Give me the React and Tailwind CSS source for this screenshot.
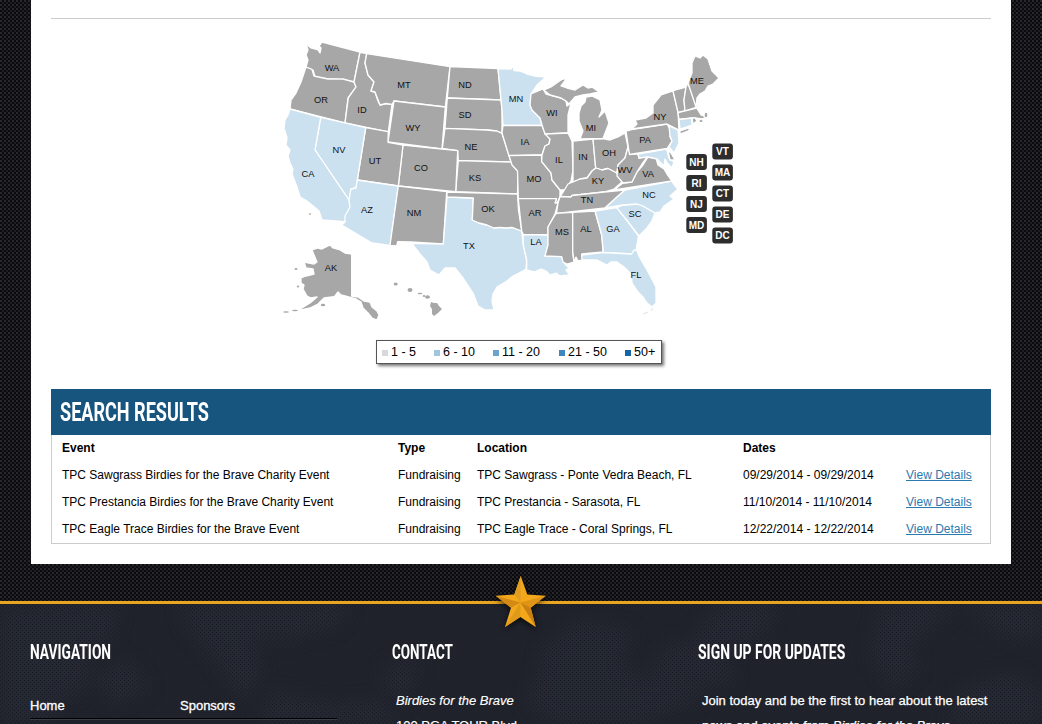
import React from "react";

const GRAY = "#a7a7a7";
const BLUE = "#cce1f0";

const states = [
  ["WA", GRAY, 332, 67, "306,44 311,48 318,50 320,53 321,48 319,46 322,42 360,52 354,82 343,80 328,79 315,77 313,70 306,67 308,60 306,55 308,50"],
  ["OR", GRAY, 321, 99, "306,67 312,69.5 314,76 328,79 343,79 354,82 356,87 348,98 345,123 290,109 291,100 296,93 301,82"],
  ["ID", GRAY, 362, 109, "360,52.3 366.7,53.7 365,63 368,75 374,82 371,91 375,92 378,101 380,105 386,103.5 392,104 388.3,132 345,123 348.3,98 356,87 354,82"],
  ["MT", GRAY, 404, 84, "366.7,53.7 450,66.7 445.3,107 394,101 392,104.5 386,103.5 380,105 375,92 371,91 374,82 368,75 365,63"],
  ["WY", GRAY, 413, 127, "394,101 445.3,107 442,149 388,142"],
  ["ND", GRAY, 465, 84, "450,66.7 498,68.5 501,100 447.3,98"],
  ["SD", GRAY, 465, 114, "447.3,98 501,100 502,110 502,133 496.7,131 486.7,130 445,128.3"],
  ["NE", GRAY, 471, 146, "445,128.3 486.7,130 496.7,131 502,133.5 509,155 511,162 458.3,160.7 457.7,150.7 442.3,148.5"],
  ["KS", GRAY, 475, 177, "458.3,160.7 511,162 514,167 518,171 517.5,194 455.7,191.7"],
  ["CO", GRAY, 421, 167, "403,145 442,149 457.7,150.7 455.7,191.7 398.3,186"],
  ["UT", GRAY, 375, 160, "365.7,127.7 388.3,131.7 388,142.3 403,145 398.3,186 357.3,180"],
  ["NV", BLUE, 339, 149, "320.7,117.3 365.7,127.7 357.3,180 356,188 351,189 349,200 315,150"],
  ["CA", BLUE, 308, 173, "290,109 320.7,117.3 315,150 349,200 350,207 345,221.7 322,220 319,211 307,201 300,197 297,187 292,174 293,169 290,163 288,156 290,150 286,145 287,138 284,128 285,120 288,115"],
  ["AZ", BLUE, 367, 209, "357.3,180 398.3,186 390,245.5 372,243 341.7,225 345,222 345,216 350,207 349,200 351,189 356,188"],
  ["NM", GRAY, 414, 212, "398.3,186 446.7,191.7 443.3,244 411,242 397.7,241.7 396.7,246 390,245.5"],
  ["TX", BLUE, 469, 245, "447,197 473.3,198 472.3,220 479,223 487,225 494,228 500,227.3 506,228 512,227.3 521.7,231 523.3,245 526.7,260 526,269.3 519,273 513,276 507,281 497,287 493,294 492,301 494,310 485,310 478,306 473,293 463,278 455,268 445,268 439,275 430,270 427,262 420,254 411.7,243.3 443.3,244"],
  ["OK", GRAY, 488, 208, "447,192 517.5,194 518.5,210 521.7,231 512,227.3 506,228 500,227.3 494,228 487,225 479,223 472.3,220 473.3,198 447,197"],
  ["MN", BLUE, 516, 98, "498,68.7 511,69 512.5,65 514,70.5 520,71 527,74 535,76 546,77 537,85 533,91 531,94 530,105 532,110 540,118 542,125.5 503,125.5 502,110"],
  ["IA", GRAY, 525, 141, "503,125.5 542,125.5 545,133 550,139 549,144 545,146 542,155 509,156 502,133"],
  ["MO", GRAY, 534, 178, "509,155.5 541.5,155 541.7,161.7 551,173 552,180 560,190 560,197 557,203 555,203 556.5,198.7 518.3,198.7 517.5,171 512,165"],
  ["AR", GRAY, 535, 212, "518.3,198.7 556.5,198.7 555,203 558,203 555,214 548,227 548,235 523.3,234.5 521.7,231"],
  ["LA", BLUE, 536, 241, "523,234.7 548,235 548,245 545,256 561.7,256.7 564,263 569,268 566,270 570,275 560,276 556,273 550,275 546,271 541,269 534,272 526.7,270 526.7,260 523.3,245"],
  ["WI", GRAY, 552, 112, "531,94 538,91 543,89 546,94 550,95 561,98 566,101 567,106 571,103 568,115 568,133 545,134 542,125 540,118 532,110 530,105"],
  ["IL", GRAY, 559, 159, "545,134 568,133 572,141 573,170 571,181 565,190 560,190 552,180 551,173 541.7,161.7 542,155 545,146 549,144 550,139"],
  ["IN", GRAY, 583, 156, "573,141 593,139 595.7,168 592,171 587,178 580,179 573,182 573,170"],
  ["OH", GRAY, 609, 152, "593,139 603,138.5 610,140 618,137 625,133 628,147 625,158 618,165 616.7,173 608,168.5 602,170 595.7,168"],
  ["MI", GRAY, 591, 127, "580,139 583,131 579,121 579,113 581,106 585,102 586,97 592,96 600,100 602,110 599,117 605,111 609,123 603,138.5"],
  ["", GRAY, 0, 0, "544,90 551,87 561,80 567,78 561,86 567,88 575,90 583,85 588,88 592,87 599,92 590,94 583,95 575,97 569,104 566,101 561,98 550,95"],
  ["KY", GRAY, 598, 180, "560,197 565,189 568,184 573,182 580,179 587,178 592,171 596,168 602,170 608,168.5 616.7,173 622,182 614,189 604,192 572,195.5 571,197"],
  ["TN", GRAY, 587, 199, "560,196.5 571,197 572,195.5 604,192 625,190 617,197 605,208 556.5,213.5 558,203"],
  ["MS", GRAY, 562, 231, "556.5,213.3 572.7,212.3 572.7,251.7 574,262 567,264 563,262 561.7,256.7 545,256 548,245 548,227 555,215"],
  ["AL", GRAY, 586, 228, "572.7,212.3 595,211 601.7,235 603,252 581.7,254 583,260 578,261 576,257 574,262 572.7,251"],
  ["GA", BLUE, 613, 228, "595,211 616.7,207.7 626.7,220 638.5,236 636,250 634,251 631.7,254 603.5,252.5 601.7,235"],
  ["SC", BLUE, 635, 213, "616.7,207.7 623,205 637,204 643,206 655,213 652,221 647,228 639,236 626.7,220"],
  ["NC", BLUE, 649, 194, "605,208 617,197 625,190 671.7,181 675,186 678,189 670,196 674,199 664,206 660,212 655,213 643,206 637,204 623,205"],
  ["FL", BLUE, 636, 274, "581.7,255 603,252.7 631.7,254 634,250 637,251 640,258 648,271.7 656,287 656,303 652,307 647,303 643,297 638,292 632,283 631,274 624,267 617,262 611,262 607,265 597,260 582,260"],
  ["VA", GRAY, 648, 173, "614,190 623,183 632,182 637,172 643,165 648,157 656,158 658,165 664,169 667,174 672,181"],
  ["WV", GRAY, 625, 169, "628,147 630,154 638,154 639,158 648,156 642,164 637,172 632,182 623,183 617,176 618,165 625,158"],
  ["", BLUE, 0, 0, "638,154 666.7,149 669,158 674,162 672,168 668,164 665,159 664,166 657,159 648,157 639,158"],
  ["", GRAY, 0, 0, "668,150 671,153 675,160 670,160"],
  ["PA", GRAY, 645, 139, "626,131 631.7,129.5 667,124 671,131 670,137 672,141 667,148.5 629.5,154.5"],
  ["NY", GRAY, 660, 116, "631.7,129 637,124 635,120 646,118 653,113 653,105 661,95 673,91 678,112 679,130 667,124"],
  ["", BLUE, 0, 0, "669,126 678,130 679,143 674,153 669,147 672,141 670,136"],
  ["", GRAY, 0, 0, "680,131 692,127 688,131 680,134"],
  ["", GRAY, 0, 0, "673,90.7 686,87 684,100 685,111 678,112.5"],
  ["", GRAY, 0, 0, "686,87 688,83 696.7,107 685,111 684,100"],
  ["", GRAY, 0, 0, "678,112.7 696.7,108 701,115 706,117 702,119 695,118 679,119.5"],
  ["", BLUE, 0, 0, "679,119.5 691.5,118 692,125 680,129"],
  ["", GRAY, 0, 0, "692,118 695,118 697,121 693,124"],
  ["ME", GRAY, 697, 80, "688,83 692,73 692,63 695,56 700,58 703,55 708,59 712,71 719,78 713,84 708,86 705,91 700,94 697,98 696,107"],
  ["AK", GRAY, 331, 267, "312,250 318,248 322,249 330,245 333,248 340,250 345,253 351.7,254 351.7,296 358,297 364,301 370,302 372,307 377,311 379,315 377,320 372,318 368,313 363,308 361,302 356,299 345,296 341,295 338,292 335,296 332,297 324,298 318,304 310,308 297,311 310,303 317,297 311,298 307,296 303,289 304,285 301,283 301,278 306,276 314,274 313,269 306,268 304,262 314,264 317,262"],
];

const badges = [
  ["VT", 712, 143.5], ["NH", 686, 154], ["MA", 712, 164.5], ["RI", 686, 175], ["CT", 712, 185.5],
  ["NJ", 686, 196], ["DE", 712, 206.5], ["MD", 686, 217], ["DC", 712, 227.5],
];

const islets = [
  [395.7, 284, 2, 1.5], [410, 290, 2.5, 2], [420, 293.5, 2.5, 0.8], [424, 296, 1.2, 1], [427.5, 297, 2.5, 1.8],
  [310, 214, 1.2, 0.8], [296, 269, 1.5, 1], [298, 286.5, 1.2, 1], [323, 305, 2.2, 1.3], [295, 310.5, 3, 0.8], [286, 312, 3, 0.8],
  [701, 121, 1.5, 1], [706, 115, 1.3, 2.2],
];

function UsMap() {
  return (
    <svg className="ml-[224px] block h-[290px] w-[470px]" viewBox="275 35 470 290" fontFamily="Liberation Sans, Arial, sans-serif">
      <g stroke="#fff" strokeWidth="1.3" strokeLinejoin="round">
        {states.map(([, fill, , , pts], i) => (
          <polygon key={i} points={pts} fill={fill} />
        ))}
      </g>
      {islets.map(([cx, cy, rx, ry], i) => (
        <ellipse key={i} cx={cx} cy={cy} rx={rx} ry={ry} fill={GRAY} />
      ))}
      <polygon points="431,302 434,303 437,303 439,306 442,309 438,313 434,316 432,314 432,309 430,306" fill={GRAY} />
      <path d="M643 314l5-2M653 308l-2 3" stroke="#dde3e6" strokeWidth="1" />
      <g fontSize="9.3" fill="#111" textAnchor="middle">
        {states.filter((s) => s[0]).map(([name, , x, y]) => (
          <text key={name} x={x} y={y + 3.7}>{name}</text>
        ))}
      </g>
      {badges.map(([name, x, y]) => (
        <g key={name}>
          <rect x={x + 0.3} y={y} width="20.6" height="16" rx="3" fill="#2d2d2d" />
          <text x={x + 10.5} y={y + 11.6} fontSize="10" fontWeight="bold" fill="#fff" textAnchor="middle">{name}</text>
        </g>
      ))}
    </svg>
  );
}

const legend = [
  ["1 - 5", "bg-[#d9d9d9]", "w-[52px]"],
  ["6 - 10", "bg-[#9fc5df]", "w-[59px]"],
  ["11 - 20", "bg-[#6ba3cc]", "w-[66px]"],
  ["21 - 50", "bg-[#3f86bd]", "w-[66px]"],
  ["50+", "bg-[#1566a6]", "w-[32px]"],
];

const rows = [
  ["TPC Sawgrass Birdies for the Brave Charity Event", "TPC Sawgrass - Ponte Vedra Beach, FL", "09/29/2014 - 09/29/2014"],
  ["TPC Prestancia Birdies for the Brave Charity Event", "TPC Prestancia - Sarasota, FL", "11/10/2014 - 11/10/2014"],
  ["TPC Eagle Trace Birdies for the Brave Event", "TPC Eagle Trace - Coral Springs, FL", "12/22/2014 - 12/22/2014"],
];

const rowGrid = "grid h-[27px] grid-cols-[336px_79px_266px_163px_80px] items-center pb-[2px] pl-[10px]";

const patches = [
  "0,610 50,604 120,606 112,640 90,650 88,690 60,700 50,724 0,724",
  "178,604 260,604 350,604 340,625 290,640 255,638 262,680 240,700 215,660 190,632",
  "95,672 130,660 150,690 110,705",
  "545,645 580,620 632,630 622,665 650,680 690,665 700,700 640,724 560,724 525,705 535,680",
  "650,670 672,640 700,655 690,690 655,694",
  "880,605 960,604 910,645 918,670 892,690 870,655",
  "965,604 1042,604 1042,640 1000,634",
  "960,690 1010,672 1042,690 1042,724 950,724",
  "385,665 420,660 408,700 385,695",
  "270,690 330,704 380,700 400,724 260,724",
  "720,604 780,604 760,640 725,650 735,680 700,690 690,640",
];

function FooterTexture() {
  return (
    <svg className="absolute inset-0 h-full w-full" viewBox="0 604 1042 120" preserveAspectRatio="none">
      <defs>
        <pattern id="mesh" width="4" height="4" patternUnits="userSpaceOnUse">
          <rect width="4" height="4" fill="#272a36" />
          <path d="M0 0h1v1h-1zM2 2h1v1h-1z" fill="#171b21" />
        </pattern>
        <pattern id="fine" width="4" height="4" patternUnits="userSpaceOnUse">
          <rect width="4" height="4" fill="#20232c" />
          <path d="M0 0h1v1h-1zM2 2h1v1h-1z" fill="#1b1e25" />
        </pattern>
        <filter id="soft"><feGaussianBlur stdDeviation="8" /></filter>
        <mask id="camo">
          <g fill="#ccc" filter="url(#soft)">
            {patches.map((p, i) => <polygon key={i} points={p} />)}
          </g>
        </mask>
      </defs>
      <rect x="0" y="604" width="1042" height="120" fill="url(#fine)" />
      <rect x="0" y="604" width="1042" height="120" fill="url(#mesh)" mask="url(#camo)" />
    </svg>
  );
}

function Star() {
  return (
    <svg className="absolute left-[490px] top-[-33px] h-[60px] w-[62px] drop-shadow-[0_2px_3px_rgba(0,0,0,0.7)]" viewBox="490 571 62 60">
      <polygon points="520.7,576 527.3,594.5 545.7,595.7 530.7,607.7 535.7,627 520.3,617 505,627 511,607.7 495.7,595.7 514.3,594.5" fill="#f3a81c" />
      <g fill="#c97e12">
        <polygon points="520.7,576 520.5,602.5 514.3,594.5" fill="#e09c20" />
        <polygon points="495.7,595.7 520.5,602.5 511,607.7" fill="#d58a16" />
        <polygon points="545.7,595.7 520.5,602.5 530.7,607.7" fill="#df9418" />
        <polygon points="505,627 520.5,602.5 520.3,617" fill="#e09a1a" />
        <polygon points="535.7,627 520.5,602.5 530.7,607.7" fill="#c98013" />
      </g>
    </svg>
  );
}

function FooterHeading({ children, scale }) {
  return (
    <h2 className={"h-[24px] w-max origin-left whitespace-nowrap font-[Roboto,sans-serif] text-[21px] font-bold leading-[24px] " + scale}>
      {children}
    </h2>
  );
}

export default function App() {
  return (
    <div className="h-[724px] w-[1042px] overflow-hidden bg-[#0b0b0e] bg-[radial-gradient(circle_at_1px_1px,#28282e_0.7px,transparent_1px),radial-gradient(circle_at_3px_3px,#1d1d22_0.7px,transparent_1px)] bg-[length:4px_4px] font-['Liberation_Sans',Arial,sans-serif] text-[12px] text-black">
      <main className="mx-[31px] h-[564px] bg-white px-5">
        <div className="mb-4 h-[19px] border-b border-[#ccc]" />
        <UsMap />
        <div className="ml-[325px] mt-[15px] flex h-[24px] w-[286px] items-center border border-[#555] pl-[5px] leading-[14px] shadow-[2px_2px_3px_rgba(0,0,0,0.55)]">
          {legend.map(([label, color, width]) => (
            <div key={label} className={"flex shrink-0 items-center gap-[3px] whitespace-nowrap text-[12.5px] " + width}>
              <span className={"mt-[2px] size-[6px] shrink-0 " + color} />
              {label}
            </div>
          ))}
        </div>
        <section className="mt-[25px] h-[155px] border border-[#ccc]">
          <div className="-mx-px -mt-px h-[46px] bg-[#17557f] pl-[9px] text-white">
            <h1 className="w-max origin-left scale-x-[0.695] whitespace-nowrap font-[Roboto,sans-serif] text-[26px] font-bold leading-[46px]">SEARCH RESULTS</h1>
          </div>
          <div className={rowGrid + " font-bold"}>
            <span>Event</span><span>Type</span><span>Location</span><span>Dates</span>
          </div>
          {rows.map(([event, location, dates]) => (
            <div key={event} className={rowGrid}>
              <span>{event}</span>
              <span>Fundraising</span>
              <span>{location}</span>
              <span>{dates}</span>
              <a className="text-[#2a7ab0] underline">View Details</a>
            </div>
          ))}
        </section>
      </main>
      <div className="h-[37px]" />
      <footer className="relative h-[123px] border-t-[3px] border-[#e9a51f] text-[13px] text-white">
        <FooterTexture />
        <Star />
        <div className="relative grid grid-cols-[362px_306px_1fr] pl-[30px] pt-[36px]">
          <div>
            <FooterHeading scale="scale-x-[0.655]">NAVIGATION</FooterHeading>
            <div className="mt-[32px] grid h-[23px] w-[307px] grid-cols-[150px_1fr] border-b border-black leading-[19px] shadow-[0_1px_0_#3a3e48] [-webkit-text-stroke:0.3px_white]">
              <span>Home</span><span>Sponsors</span>
            </div>
          </div>
          <div>
            <FooterHeading scale="scale-x-[0.64]">CONTACT</FooterHeading>
            <p className="mt-[24px] pl-1 leading-[25px] [-webkit-text-stroke:0.15px_white]"><em>Birdies for the Brave</em><br />100 PGA TOUR Blvd</p>
          </div>
          <div>
            <FooterHeading scale="scale-x-[0.663]">SIGN UP FOR UPDATES</FooterHeading>
            <p className="mt-[24px] whitespace-nowrap pl-1 leading-[25px] [-webkit-text-stroke:0.25px_white]">Join today and be the first to hear about the latest<br />news and events from <em>Birdies for the Brave</em></p>
          </div>
        </div>
      </footer>
    </div>
  );
}
